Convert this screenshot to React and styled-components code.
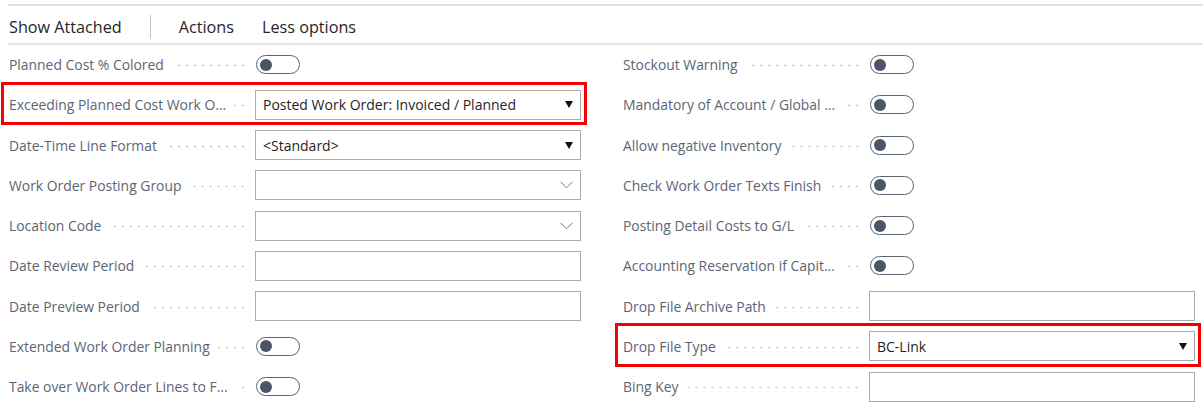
import React from "react";
import styled, { createGlobalStyle, css } from "styled-components";

const GlobalStyle = createGlobalStyle`
  html, body {
    margin: 0;
    padding: 0;
    background: #ffffff;
  }
  body {
    font-family: "Open Sans", "Noto Sans", sans-serif;
  }
`;

const leftRows = [
  { label: "Planned Cost % Colored", type: "toggle" },
  { label: "Exceeding Planned Cost Work O...", type: "select", value: "Posted Work Order: Invoiced / Planned", highlight: true },
  { label: "Date-Time Line Format", type: "select", value: "<Standard>" },
  { label: "Work Order Posting Group", type: "lookup" },
  { label: "Location Code", type: "lookup" },
  { label: "Date Review Period", type: "input" },
  { label: "Date Preview Period", type: "input" },
  { label: "Extended Work Order Planning", type: "toggle" },
  { label: "Take over Work Order Lines to F...", type: "toggle" },
];

const rightRows = [
  { label: "Stockout Warning", type: "toggle" },
  { label: "Mandatory of Account / Global ...", type: "toggle" },
  { label: "Allow negative Inventory", type: "toggle" },
  { label: "Check Work Order Texts Finish", type: "toggle" },
  { label: "Posting Detail Costs to G/L", type: "toggle" },
  { label: "Accounting Reservation if Capit...", type: "toggle" },
  { label: "Drop File Archive Path", type: "input" },
  { label: "Drop File Type", type: "select", value: "BC-Link", highlight: true },
  { label: "Bing Key", type: "input" },
];

const Field = ({ row }) => {
  if (row.type === "toggle") {
    return (
      <Toggle>
        <Knob />
      </Toggle>
    );
  }
  if (row.type === "select") {
    return (
      <Box>
        <BoxText>{row.value}</BoxText>
        <svg width="8" height="7" viewBox="0 0 8 7">
          <path d="M0 0 H8 L4 7 Z" fill="#111" />
        </svg>
      </Box>
    );
  }
  if (row.type === "lookup") {
    return (
      <Box>
        <BoxText />
        <svg width="13" height="8" viewBox="0 0 13 8">
          <path d="M0.5 0.8 L6.5 6.8 L12.5 0.8" fill="none" stroke="#7a7a7a" strokeWidth="1" />
        </svg>
      </Box>
    );
  }
  return (
    <Box>
      <BoxText />
    </Box>
  );
};

const FieldColumn = ({ rows }) => (
  <Column>
    {rows.map((row) => (
      <Row key={row.label} $highlight={row.highlight}>
        <Caption>
          <CaptionText>{row.label}</CaptionText>
          <Leader />
        </Caption>
        <Control>
          <Field row={row} />
        </Control>
      </Row>
    ))}
  </Column>
);

const App = () => (
  <>
    <GlobalStyle />
    <Page>
      <TopRule />
      <Toolbar>
        <ToolButton>Show Attached</ToolButton>
        <ToolDivider />
        <ToolButton>Actions</ToolButton>
        <ToolButton>Less options</ToolButton>
      </Toolbar>
      <Columns>
        <FieldColumn rows={leftRows} />
        <FieldColumn rows={rightRows} />
      </Columns>
    </Page>
  </>
);

const Page = styled.div`
  width: 1203px;
  height: 409px;
  box-sizing: border-box;
  padding: 4px 0 0 8px;
  overflow: hidden;
`;

const TopRule = styled.div`
  height: 2px;
  background: #dedede;
`;

const Toolbar = styled.div`
  display: flex;
  align-items: center;
  height: 39px;
  padding: 4px 0 0 1px;
  box-sizing: border-box;
  border-bottom: 2px solid #e6e6e6;
`;

const ToolButton = styled.span`
  font-size: 16.2px;
  color: #262626;
  margin-right: 28px;
  white-space: nowrap;
`;

const ToolDivider = styled.span`
  width: 1px;
  height: 24px;
  background: #c8c8c8;
  margin-right: 28px;
`;

const Columns = styled.div`
  display: grid;
  grid-template-columns: 572px 572px;
  column-gap: 42px;
  padding-left: 1px;
  margin-top: -0.5px;
`;

const Column = styled.div`
  display: flex;
  flex-direction: column;
`;

const Row = styled.div`
  position: relative;
  display: flex;
  align-items: center;
  height: 40.25px;

  ${(p) =>
    p.$highlight &&
    css`
      &::after {
        content: "";
        position: absolute;
        left: -8px;
        right: -6px;
        top: -3px;
        bottom: 0;
        border: 3px solid #f50000;
        pointer-events: none;
      }
    `}
`;

const Caption = styled.div`
  display: flex;
  align-items: center;
  width: 246px;
  flex-shrink: 0;
`;

const CaptionText = styled.span`
  font-size: 13.9px;
  color: #5d6573;
  white-space: nowrap;
  flex-shrink: 0;
`;

const Leader = styled.span`
  flex: 1;
  min-width: 6px;
  height: 3px;
  margin: 2px 8px 0 8px;
  background-image: radial-gradient(circle, #c4c7cc 0.9px, transparent 1.2px);
  background-size: 8px 3px;
  background-repeat: repeat-x;
  background-position: right center;
`;

const Control = styled.div`
  flex: 1;
  display: flex;
  align-items: center;
`;

const Box = styled.div`
  flex: 1;
  height: 30px;
  box-sizing: border-box;
  border: 1px solid #ababab;
  display: flex;
  align-items: center;
  padding: 0 7px;
  background: #fff;
`;

const BoxText = styled.span`
  flex: 1;
  font-size: 14px;
  color: #1f1f1f;
  white-space: nowrap;
`;

const Toggle = styled.div`
  width: 44px;
  height: 19px;
  box-sizing: border-box;
  margin-left: 1px;
  border: 1.5px solid #5a6474;
  border-radius: 10px;
  display: flex;
  align-items: center;
  padding-left: 2.5px;
`;

const Knob = styled.span`
  width: 12px;
  height: 12px;
  border-radius: 50%;
  background: #4b5568;
`;

export default App;
